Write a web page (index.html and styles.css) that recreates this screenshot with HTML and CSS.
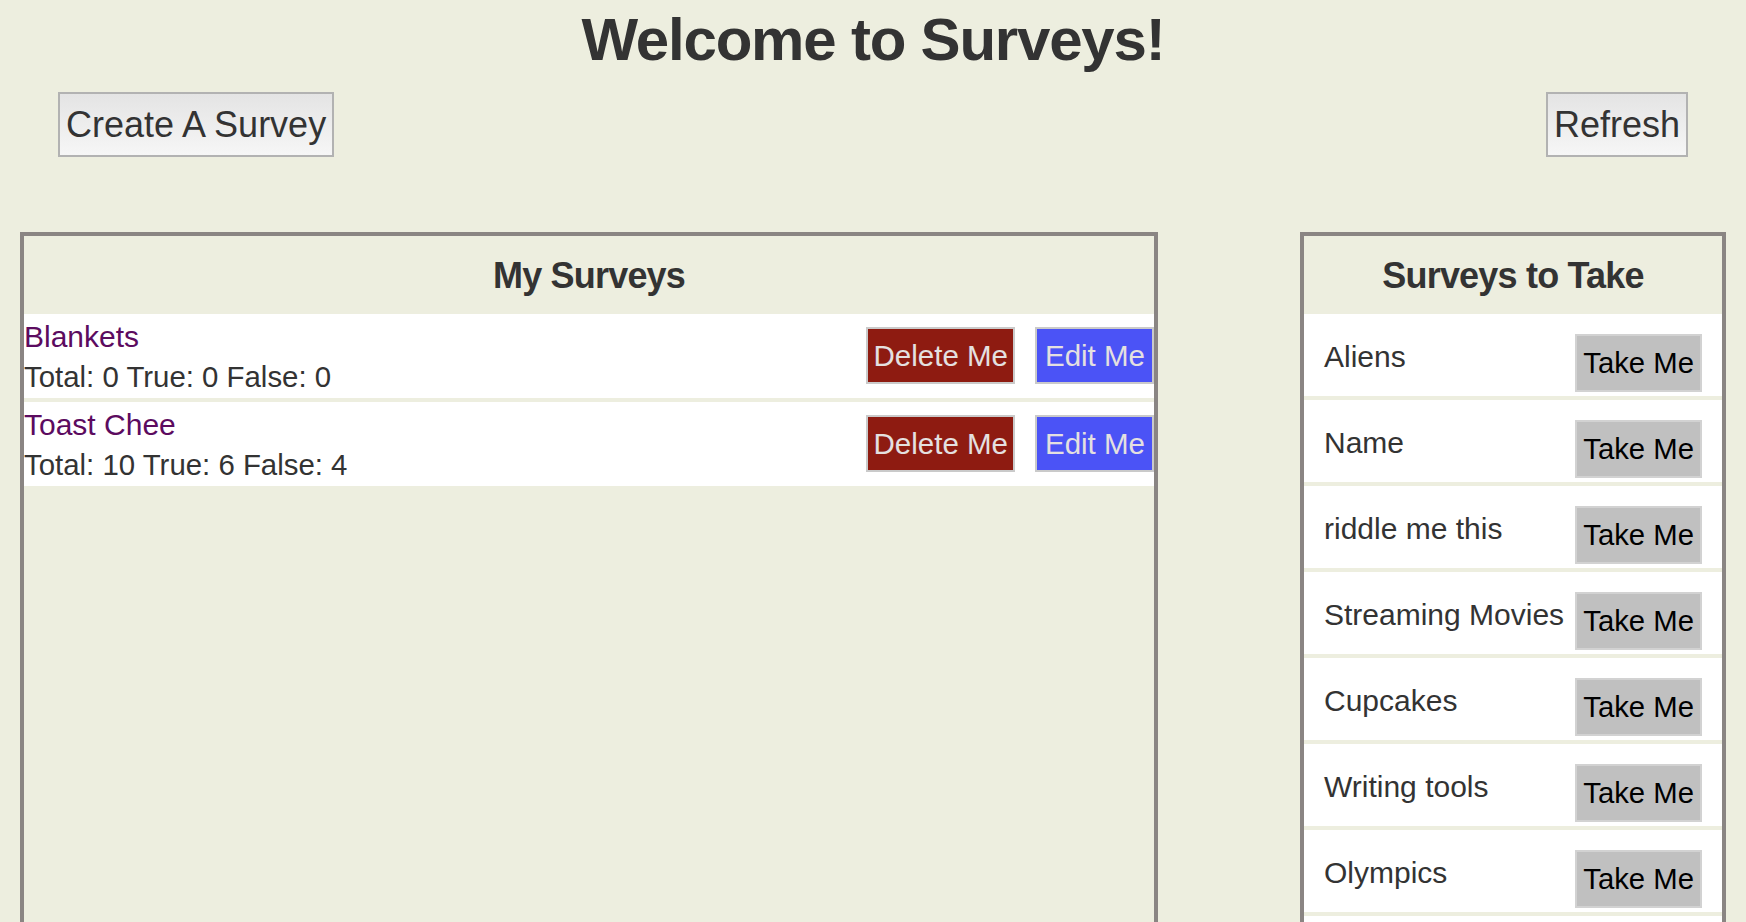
FILE: index.html
```html
<!DOCTYPE html>
<html lang="en">
<head>
<meta charset="utf-8">
<title>Surveys</title>
<link rel="stylesheet" href="styles.css">
</head>
<body>
<h1 class="page-title">Welcome to Surveys!</h1>
<div class="toolbar">
  <button class="tool-btn">Create A Survey</button>
  <button class="tool-btn">Refresh</button>
</div>
<main class="panels">
  <section class="panel">
    <h2 class="panel-title">My Surveys</h2>
    <div class="my-row">
      <div class="my-info">
        <div class="my-name">Blankets</div>
        <div class="my-stats">Total: 0 True: 0 False: 0</div>
      </div>
      <div class="my-actions">
        <button class="act-btn delete">Delete Me</button>
        <button class="act-btn edit">Edit Me</button>
      </div>
    </div>
    <div class="my-row">
      <div class="my-info">
        <div class="my-name">Toast Chee</div>
        <div class="my-stats">Total: 10 True: 6 False: 4</div>
      </div>
      <div class="my-actions">
        <button class="act-btn delete">Delete Me</button>
        <button class="act-btn edit">Edit Me</button>
      </div>
    </div>
  </section>
  <section class="panel">
    <h2 class="panel-title">Surveys to Take</h2>
    <div class="take-row"><span class="take-name">Aliens</span><button class="take-btn">Take Me</button></div>
    <div class="take-row"><span class="take-name">Name</span><button class="take-btn">Take Me</button></div>
    <div class="take-row"><span class="take-name">riddle me this</span><button class="take-btn">Take Me</button></div>
    <div class="take-row"><span class="take-name">Streaming Movies</span><button class="take-btn">Take Me</button></div>
    <div class="take-row"><span class="take-name">Cupcakes</span><button class="take-btn">Take Me</button></div>
    <div class="take-row"><span class="take-name">Writing tools</span><button class="take-btn">Take Me</button></div>
    <div class="take-row"><span class="take-name">Olympics</span><button class="take-btn">Take Me</button></div>
    <div class="take-row take-row-empty"></div>
  </section>
</main>
</body>
</html>
```

FILE: styles.css
```css
* {
  box-sizing: border-box;
}

html, body {
  margin: 0;
  padding: 0;
}

body {
  background: #edeedf;
  color: #333333;
  font-family: "Liberation Sans", Arial, Helvetica, sans-serif;
}

button {
  font-family: "Liberation Sans", Arial, Helvetica, sans-serif;
  margin: 0;
  cursor: pointer;
}

.page-title {
  margin: 0;
  padding-top: 5px;
  height: 75px;
  line-height: 70px;
  font-size: 60px;
  font-weight: bold;
  letter-spacing: -1.2px;
  text-align: center;
  color: #333333;
}

.toolbar {
  display: flex;
  justify-content: space-between;
  padding: 0 58px;
  margin-top: 17px;
}

.tool-btn {
  height: 65px;
  padding: 0 6px;
  border: 2px solid #b2b2b2;
  background: linear-gradient(#e4e4e4, #f6f6f6);
  color: #333333;
  font-size: 36px;
  line-height: 61px;
}

.panels {
  display: grid;
  grid-template-columns: 1fr 426px;
  column-gap: 142px;
  padding: 0 20px;
  margin-top: 75px;
}

.panel {
  border: 4px solid #8a8583;
  min-height: 800px;
}

.panel-title {
  margin: 0;
  padding-top: 2px;
  height: 78px;
  line-height: 76px;
  font-size: 36px;
  font-weight: bold;
  letter-spacing: -0.8px;
  text-align: center;
  color: #333333;
}

.my-row {
  display: flex;
  align-items: center;
  justify-content: space-between;
  background: #ffffff;
  padding: 2px 0;
  margin-bottom: 4px;
}

.my-name {
  color: #5c0b5f;
  font-size: 30px;
  line-height: 41px;
}

.my-stats {
  color: #333333;
  font-size: 29.4px;
  line-height: 39px;
}

.my-actions {
  display: flex;
  gap: 20px;
  margin-top: -2px;
}

.act-btn {
  height: 57px;
  padding: 0 6px;
  border: 2px solid #cacaca;
  color: #e4e0e0;
  font-size: 29.5px;
  line-height: 53px;
}

.act-btn.delete {
  background: #8e1b11;
  padding: 0 5px 0 6px;
}

.act-btn.edit {
  background: #4b53f6;
  padding: 0 7px 0 8px;
}

.take-row {
  display: flex;
  align-items: flex-start;
  justify-content: space-between;
  background: #ffffff;
  padding: 20px 20px 4px;
  margin-bottom: 4px;
}

.take-row-empty {
  height: 82px;
}

.take-name {
  font-size: 30px;
  line-height: 46px;
  color: #333333;
  white-space: nowrap;
}

.take-btn {
  flex-shrink: 0;
  height: 58px;
  padding: 0 6px;
  border: 2px solid #d2d2d2;
  background: #c0c0c0;
  color: #000000;
  font-size: 29.3px;
  line-height: 54px;
}
```
